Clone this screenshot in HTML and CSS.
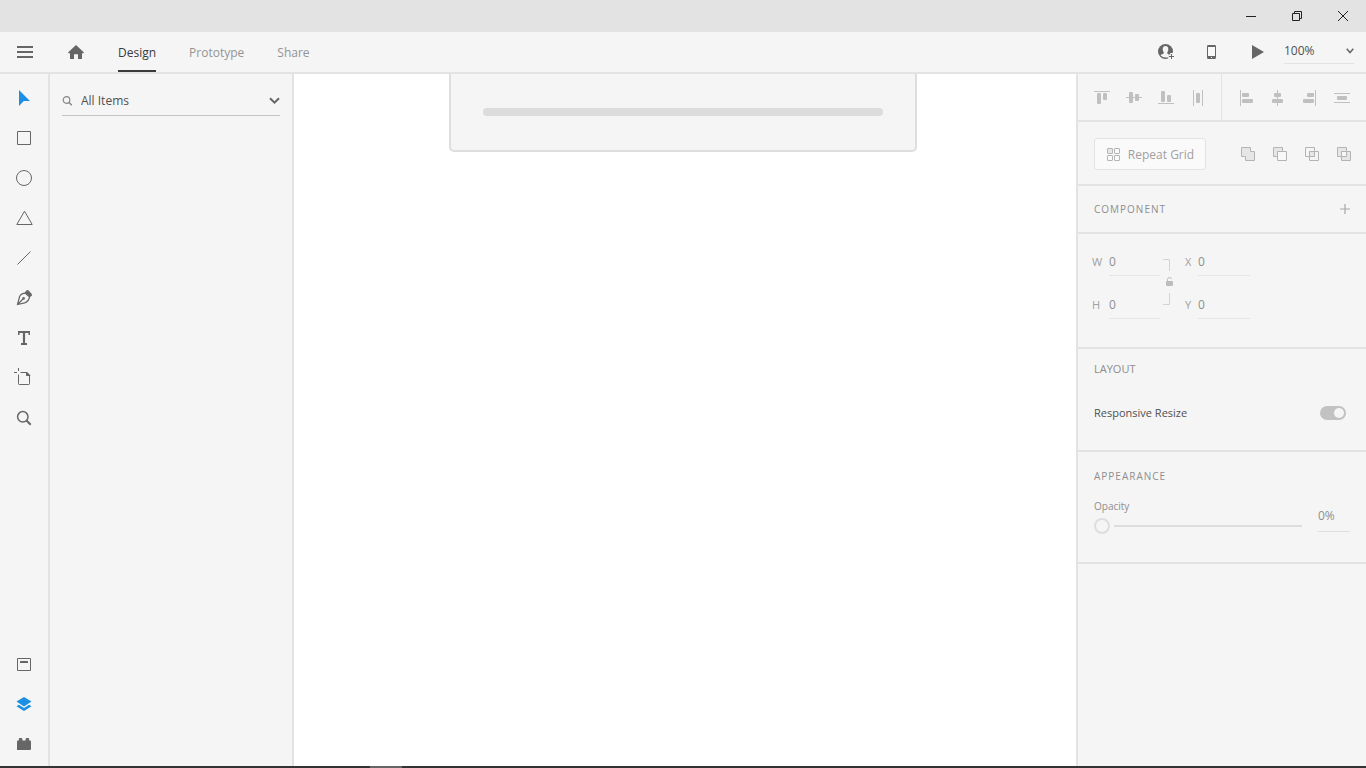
FILE: index.html
```html
<!DOCTYPE html>
<html lang="en">
<head>
    <meta charset="UTF-8">
    <meta name="viewport" content="width=device-width, initial-scale=1.0">
    <title>Design</title>
    <link rel="stylesheet" href="styles.css">
</head>
<body>
    <div class="titlebar">
        <button class="window-btn" aria-label="Minimize">
            <svg width="10" height="10" viewBox="0 0 10 10"><path d="M0 5.5h10" stroke="#222"/></svg>
        </button>
        <button class="window-btn" aria-label="Restore">
            <svg width="10" height="10" viewBox="0 0 10 10" fill="none" stroke="#222"><path d="M.5 2.5h7v7h-7zM2.5 2.5v-2h7v7h-2"/></svg>
        </button>
        <button class="window-btn" aria-label="Close">
            <svg width="10" height="10" viewBox="0 0 10 10"><path d="M0 0l10 10M10 0L0 10" stroke="#222"/></svg>
        </button>
    </div>

    <header class="header">
        <button class="menu-btn" aria-label="Menu">
            <svg width="16" height="12" viewBox="0 0 16 12" fill="#666"><path d="M0 0h16v2H0zM0 5h16v2H0zM0 10h16v2H0z"/></svg>
        </button>
        <button class="menu-btn home" aria-label="Home">
            <svg width="16" height="16" viewBox="0 0 16 16" fill="#666"><path d="M8 1L0 8.400l.7.800H2V15h4v-4.800h4V15h4V9.200h1.300l.7-.8z"/></svg>
        </button>
        <nav class="tabs">
            <a class="tab active" href="#">Design</a>
            <a class="tab" href="#">Prototype</a>
            <a class="tab" href="#">Share</a>
        </nav>
        <div class="header-actions">
            <button class="action-btn" aria-label="Invite">
                <svg width="18" height="18" viewBox="0 0 18 18">
                    <circle cx="8.500" cy="8.500" r="7.500" fill="#666"/>
                    <path d="M8.500 3C6.500 3 5.600 4.500 5.700 6.300c.1 1.500.5 2.300 1 3 .3.900-.1 1.300-1 1.700-.9.300-1.700.7-2.200 1.300A6.700 6.700 0 0 0 8.500 14.500h3V11.300c-1.300-.6-1.500-1.100-1.200-2 .6-.7 1-1.500 1-3C11.400 4.500 10.500 3 8.500 3z" fill="#f5f5f5"/>
                    <path d="M11.200 11.500h2V10h3.300v6h-5.300z" fill="#f5f5f5"/>
                    <path d="M14.500 11v5M12 13.500h5" stroke="#666"/>
                </svg>
            </button>
            <button class="action-btn" aria-label="Device preview">
                <svg width="10" height="16" viewBox="0 0 10 16"><rect x=".5" y="1.500" width="8" height="13" rx="1" fill="#f8f8f8" stroke="#666"/><path d="M.5 1h8v2h-8zM.5 12h8v3h-8z" fill="#666"/><path d="M4 13.500h1" stroke="#f5f5f5"/></svg>
            </button>
            <button class="action-btn" aria-label="Play">
                <svg width="12" height="14" viewBox="0 0 12 14"><path d="M0 0v14l12-7z" fill="#666"/></svg>
            </button>
            <div class="zoom-box">
                <select class="zoom-select" aria-label="Zoom">
                    <option>100%</option>
                </select>
                <svg class="chevron" width="8" height="6" viewBox="0 0 8 6"><path d="M.7.8L4 4.500 7.300.8" fill="none" stroke="#666" stroke-width="1.500"/></svg>
            </div>
        </div>
    </header>

    <main class="workspace">
        <div class="toolbar">
            <div class="tool-group">
                <button class="tool" aria-label="Select">
                    <svg width="24" height="24" viewBox="0 0 24 24"><path d="M7 4v16l4.700-5H18z" fill="#1a8fe3" stroke="none"/></svg>
                </button>
                <button class="tool" aria-label="Rectangle">
                    <svg width="24" height="24" viewBox="0 0 24 24"><path d="M5.500 5.500h13v13h-13z"/></svg>
                </button>
                <button class="tool" aria-label="Ellipse">
                    <svg width="24" height="24" viewBox="0 0 24 24"><circle cx="12" cy="12" r="7.500"/></svg>
                </button>
                <button class="tool" aria-label="Polygon">
                    <svg width="24" height="24" viewBox="0 0 24 24"><path d="M12.500 5.200l7.700 13.300H4.800z"/></svg>
                </button>
                <button class="tool" aria-label="Line">
                    <svg width="24" height="24" viewBox="0 0 24 24"><path d="M5.500 18.500L18.500 5.500"/></svg>
                </button>
                <button class="tool" aria-label="Pen">
                    <svg width="24" height="24" viewBox="0 0 24 24"><path d="M13.500 7.200Q9 7.500 7.600 10.500L5.500 18.500l7.200-1.600q4.300-1.700 4.800-6zM5.500 18.500l5.500-5.500" stroke-width="1.200"/><circle cx="11.600" cy="12.400" r="1.300" fill="#666" stroke="none"/><path d="M12.800 6.600l2-2.600 1.600.300 3.400 3.600v1.300l-1.900 2.400z" fill="#666" stroke="none"/></svg>
                </button>
                <button class="tool" aria-label="Text">
                    <svg width="24" height="24" viewBox="0 0 24 24"><path d="M6 5h12v4h-1.500V7h-3.400v10H15v2H9v-2h1.900V7H7.500v2H6z" fill="#666" stroke="none"/></svg>
                </button>
                <button class="tool" aria-label="Artboard">
                    <svg width="24" height="24" viewBox="0 0 24 24"><path d="M8.500 6.500h6l3 3v8.200q0 .8-.8.800H7.300q-.8 0-.8-.8V8.500"/><path d="M14.500 6v3.500H18z" fill="#666"/><path d="M2 6.500h3M6.500 2v3"/></svg>
                </button>
                <button class="tool" aria-label="Zoom tool">
                    <svg width="24" height="24" viewBox="0 0 24 24"><circle cx="10.800" cy="10.800" r="5.200" stroke-width="1.500"/><path d="M14.500 14.500l4.200 4.200" stroke-width="2"/></svg>
                </button>
            </div>
            <div class="tool-group">
                <button class="tool" aria-label="Assets">
                    <svg width="24" height="24" viewBox="0 0 24 24"><path d="M5.500 6.500h13v12h-13z"/><path d="M8 10h8" stroke-width="2"/></svg>
                </button>
                <button class="tool active" aria-label="Layers">
                    <svg width="24" height="24" viewBox="0 0 24 24"><path d="M12 5l7.500 4.500L12 14.500 4.500 9.500z"/><path d="M4.500 14.200L6.800 12.800 12 16l5.200-3.200 2.300 1.400L12 19z"/></svg>
                </button>
                <button class="tool" aria-label="Plugins">
                    <svg width="24" height="24" viewBox="0 0 24 24"><path d="M5 18V9.500q0-.9 1-.9h.8V7.300q0-1.300 1.200-1.300h1.200q1.200 0 1.200 1.300v1.300h3.200V7.300q0-1.300 1.200-1.300H16q1.200 0 1.200 1.300v1.300h.8q1 0 1 .9V17q0 1-1 1z" fill="#666" stroke="none"/></svg>
                </button>
            </div>
        </div>

        <aside class="layers">
            <div class="filter">
                <svg width="11" height="10" viewBox="0 0 11 10" fill="none" stroke="#888"><circle cx="4.500" cy="4" r="3.300" stroke-width="1.200"/><path d="M7 6.500L9.800 9.300" stroke-width="1.500"/></svg>
                <select class="filter-select" aria-label="Filter layers">
                    <option>All Items</option>
                </select>
                <svg class="chevron" width="11" height="8" viewBox="0 0 11 8"><path d="M1 1.200L5.500 5.700 10 1.200" fill="none" stroke="#666" stroke-width="2"/></svg>
            </div>
        </aside>

        <section class="canvas">
            <div class="artboard">
                <div class="bar"></div>
            </div>
        </section>

        <aside class="inspector">
            <div class="align-row">
                <div class="align-group">
                    <button class="icon-btn" aria-label="Align top"><svg width="16" height="16" viewBox="0 0 16 16"><path d="M0 1.500h16" stroke="#c0c0c0"/><rect x="3" y="3" width="4" height="11" rx="1" fill="#c0c0c0"/><rect x="9" y="3" width="4" height="7" rx="1" fill="#c0c0c0"/></svg></button>
                    <button class="icon-btn" aria-label="Align middle"><svg width="16" height="16" viewBox="0 0 16 16"><path d="M0 7.500h16" stroke="#c0c0c0"/><rect x="3" y="2" width="4" height="11" rx="1" fill="#c0c0c0"/><rect x="9" y="4" width="4" height="7" rx="1" fill="#c0c0c0"/></svg></button>
                    <button class="icon-btn" aria-label="Align bottom"><svg width="16" height="16" viewBox="0 0 16 16"><path d="M0 13.500h16" stroke="#c0c0c0"/><rect x="3" y="1" width="4" height="11" rx="1" fill="#c0c0c0"/><rect x="9" y="5" width="4" height="7" rx="1" fill="#c0c0c0"/></svg></button>
                    <button class="icon-btn" aria-label="Distribute horizontally"><svg width="16" height="16" viewBox="0 0 16 16"><path d="M3.500 0v16M12.500 0v16" stroke="#c0c0c0"/><rect x="6" y="3" width="4" height="10" rx="1" fill="#c0c0c0"/></svg></button>
                </div>
                <div class="align-group">
                    <button class="icon-btn" aria-label="Align left"><svg width="16" height="16" viewBox="0 0 16 16"><path d="M2.500 0v16" stroke="#c0c0c0"/><rect x="4" y="3" width="7" height="4" rx="1" fill="#c0c0c0"/><rect x="4" y="9" width="11" height="4" rx="1" fill="#c0c0c0"/></svg></button>
                    <button class="icon-btn" aria-label="Align center"><svg width="16" height="16" viewBox="0 0 16 16"><path d="M7.500 0v16" stroke="#c0c0c0"/><rect x="4" y="3" width="7" height="4" rx="1" fill="#c0c0c0"/><rect x="2" y="9" width="11" height="4" rx="1" fill="#c0c0c0"/></svg></button>
                    <button class="icon-btn" aria-label="Align right"><svg width="16" height="16" viewBox="0 0 16 16"><path d="M13.500 0v16" stroke="#c0c0c0"/><rect x="5" y="3" width="7" height="4" rx="1" fill="#c0c0c0"/><rect x="1" y="9" width="11" height="4" rx="1" fill="#c0c0c0"/></svg></button>
                    <button class="icon-btn" aria-label="Distribute vertically"><svg width="16" height="16" viewBox="0 0 16 16"><path d="M0 3.500h16M0 12.500h16" stroke="#c0c0c0"/><rect x="3" y="6" width="10" height="4" rx="1" fill="#c0c0c0"/></svg></button>
                </div>
            </div>

            <div class="repeat-row">
                <button class="repeat-btn">
                    <svg width="14" height="14" viewBox="0 0 14 14" fill="#fafafa" stroke="#b4b4b4"><rect x="1.500" y=".5" width="5" height="5" rx=".5" fill="#e8e8e8"/><rect x="8.500" y=".5" width="5" height="5" rx=".5"/><rect x="1.500" y="7.500" width="5" height="5" rx=".5"/><rect x="8.500" y="7.500" width="5" height="5" rx=".5"/></svg>
                    Repeat Grid
                </button>
                <div class="shape-group">
                    <button class="icon-btn" aria-label="Add"><svg width="16" height="16" viewBox="0 0 16 16" fill="#e6e6e6" stroke="#b4b4b4"><path d="M1.500 1.500h9v4h4v9h-9v-4h-4z"/></svg></button>
                    <button class="icon-btn" aria-label="Subtract"><svg width="16" height="16" viewBox="0 0 16 16" fill="#e6e6e6" stroke="#b4b4b4"><path d="M1.500 1.500h9v9h-9z"/><path d="M5.500 5.500h9v9h-9z" fill="#f8f8f8"/></svg></button>
                    <button class="icon-btn" aria-label="Intersect"><svg width="16" height="16" viewBox="0 0 16 16" fill="none" stroke="#b4b4b4"><path d="M1.500 1.500h9v9h-9z"/><path d="M5.500 5.500h9v9h-9z"/><path d="M5.500 5.500h5v5h-5z" fill="#e6e6e6"/></svg></button>
                    <button class="icon-btn" aria-label="Exclude overlap"><svg width="16" height="16" viewBox="0 0 16 16" fill="#e6e6e6" stroke="#b4b4b4"><path d="M1.500 1.500h9v9h-9z"/><path d="M5.500 5.500h9v9h-9z"/><path d="M5.500 5.500h5v5h-5z" fill="#f8f8f8"/></svg></button>
                </div>
            </div>

            <div class="component-row">
                <h2 class="section-title">COMPONENT</h2>
                <button class="add-btn" aria-label="Add component">
                    <svg width="10" height="10" viewBox="0 0 10 10"><path d="M5 0v10M0 5h10" stroke="#a8a8a8" stroke-width="1.200"/></svg>
                </button>
            </div>

            <div class="size-section">
                <div class="fields">
                    <div class="field">
                        <label for="width">W</label>
                        <input type="text" id="width" value="0">
                    </div>
                    <div class="field">
                        <label for="height">H</label>
                        <input type="text" id="height" value="0">
                    </div>
                </div>
                <button class="lock-btn" aria-label="Lock aspect ratio">
                    <svg width="10" height="56" viewBox="0 0 10 56" fill="none" stroke="#d4d4d4"><path d="M0 1.500h6.500V13M6.500 35v11.500H0"/><path d="M4.500 24v-2.500q0-2 2-2t2 1.500" stroke="#bdbdbd"/><rect x="3" y="23" width="7" height="5" rx="1" fill="#bdbdbd" stroke="none"/></svg>
                </button>
                <div class="fields position">
                    <div class="field">
                        <label for="pos-x">X</label>
                        <input type="text" id="pos-x" value="0">
                    </div>
                    <div class="field">
                        <label for="pos-y">Y</label>
                        <input type="text" id="pos-y" value="0">
                    </div>
                </div>
            </div>

            <div class="layout-section">
                <h2 class="section-title plain">LAYOUT</h2>
                <div class="resize-row">
                    <label for="resize">Responsive Resize</label>
                    <input type="checkbox" id="resize" class="switch" checked>
                </div>
            </div>

            <div class="appearance-section">
                <h2 class="section-title">APPEARANCE</h2>
                <div class="opacity-row">
                    <div class="opacity-slider">
                        <label for="opacity">Opacity</label>
                        <input type="range" id="opacity" min="0" max="100" value="0">
                    </div>
                    <input type="text" class="opacity-value" aria-label="Opacity value" value="0%">
                </div>
            </div>
        </aside>
    </main>

    <div class="taskbar"><div class="taskbar-item"></div></div>
</body>
</html>
```

FILE: styles.css
```css
* {
    box-sizing: border-box;
}

body {
    margin: 0;
    height: 100vh;
    display: flex;
    flex-direction: column;
    overflow: hidden;
    background-color: #f5f5f5;
    color: #505050;
    font-family: "Open Sans", "Noto Sans", sans-serif;
    font-size: 12px;
    line-height: 16px;
}

button {
    display: flex;
    align-items: center;
    justify-content: center;
    padding: 0;
    border: none;
    background: none;
    color: inherit;
    font: inherit;
    cursor: pointer;
}

input,
select {
    margin: 0;
    padding: 0;
    border: none;
    border-radius: 0;
    outline: none;
    background: none;
    color: inherit;
    font: inherit;
    appearance: none;
}

svg {
    display: block;
    flex-shrink: 0;
}

/* Window title bar */
.titlebar {
    display: flex;
    justify-content: flex-end;
    height: 32px;
    flex-shrink: 0;
    background-color: #e3e3e3;
}

.window-btn {
    width: 46px;
}

/* Header */
.header {
    display: flex;
    height: 42px;
    flex-shrink: 0;
    border-bottom: 2px solid #e3e3e3;
}

.menu-btn {
    width: 50px;
}

.menu-btn.home {
    width: 52px;
}

.tabs {
    display: flex;
    gap: 33px;
    padding-left: 16px;
}

.tab {
    padding-top: 13px;
    border-bottom: 2px solid transparent;
    color: #949494;
    text-decoration: none;
}

.tab.active {
    color: #3a3a3a;
    border-color: #3a3a3a;
}

.header-actions {
    display: flex;
    margin-left: auto;
    padding-right: 12px;
}

.action-btn {
    width: 46px;
}

.zoom-box {
    display: flex;
    align-items: center;
    width: 70px;
    height: 26px;
    margin: 6px 0 0 3px;
    border-bottom: 1px solid #e3e3e3;
}

.zoom-select,
.filter-select {
    flex: 1;
    min-width: 0;
}

/* Workspace */
.workspace {
    display: flex;
    flex: 1;
    min-height: 0;
}

.toolbar {
    display: flex;
    flex-direction: column;
    justify-content: space-between;
    width: 50px;
    padding: 4px 0 2px;
    border-right: 2px solid #e3e3e3;
}

.tool {
    width: 48px;
    height: 40px;
}

.tool svg {
    fill: none;
    stroke: #666;
}

.tool.active svg {
    fill: #1a8fe3;
    stroke: none;
}

.layers {
    width: 244px;
    padding: 12px;
    border-right: 2px solid #e3e3e3;
}

.filter {
    display: flex;
    align-items: center;
    gap: 8px;
    height: 30px;
    border-bottom: 1px solid #c4c4c4;
}

.canvas {
    flex: 1;
    padding-right: 4px;
    background-color: #fff;
}

.artboard {
    max-width: 468px;
    margin: 0 auto;
    padding: 34px 32px;
    border: 2px solid #dedede;
    border-top: none;
    border-radius: 0 0 5px 5px;
    background-color: #f5f5f5;
}

.bar {
    height: 8px;
    border-radius: 4px;
    background-color: #dcdcdc;
}

/* Inspector */
.inspector {
    width: 290px;
    border-left: 2px solid #e3e3e3;
    color: #8e8e8e;
}

.inspector > div {
    border-bottom: 2px solid #e3e3e3;
}

.align-row {
    display: flex;
    height: 48px;
}

.align-group {
    display: flex;
    width: 144px;
    padding: 2px 8px 0;
}

.align-group:first-child {
    border-right: 1px solid #e3e3e3;
}

.icon-btn {
    width: 32px;
    flex-shrink: 0;
}

.repeat-row {
    display: flex;
    justify-content: space-between;
    padding: 16px 6px 14px 16px;
}

.repeat-btn {
    width: 112px;
    height: 32px;
    gap: 8px;
    padding-top: 1px;
    border: 1px solid #e3e3e3;
    border-radius: 3px;
    background-color: #fafafa;
    color: #a0a0a0;
}

.shape-group {
    display: flex;
}

.section-title {
    margin: 0;
    font-size: 10px;
    font-weight: 400;
    letter-spacing: 1px;
}

.section-title.plain {
    font-size: 11px;
    letter-spacing: 0;
}

.component-row {
    display: flex;
    align-items: center;
    justify-content: space-between;
    height: 48px;
    padding: 0 16px;
}

.size-section {
    display: flex;
    padding: 18px 14px 28px;
}

.fields {
    display: flex;
    flex-direction: column;
    gap: 19px;
    width: 68px;
}

.fields.position {
    width: 65px;
    margin-left: 12px;
}

.field {
    display: flex;
}

.field label {
    width: 17px;
    padding-top: 2px;
    font-size: 11px;
    color: #a0a0a0;
}

.position .field label {
    width: 13px;
}

.field input {
    flex: 1;
    min-width: 0;
    height: 24px;
    padding-bottom: 5px;
    border-bottom: 1px solid #e6e6e6;
}

.lock-btn {
    width: 10px;
    margin-left: 3px;
}

.layout-section {
    padding: 12px 16px 27px;
}

.resize-row {
    display: flex;
    align-items: center;
    justify-content: space-between;
    height: 20px;
    margin-top: 26px;
    padding-right: 4px;
    font-size: 11px;
    color: #505050;
}

.switch {
    width: 26px;
    height: 14px;
    padding: 2px;
    border-radius: 7px;
    background-color: #c2c2c2;
}

.switch::before {
    content: "";
    display: block;
    width: 10px;
    height: 10px;
    border-radius: 50%;
    background-color: #f5f5f5;
}

.switch:checked::before {
    margin-left: auto;
}

.appearance-section {
    padding: 16px 16px 28px;
}

.opacity-row {
    display: flex;
    gap: 16px;
    margin-top: 14px;
}

.opacity-slider {
    display: flex;
    flex: 1;
    flex-direction: column;
    gap: 4px;
    font-size: 10px;
}

.opacity-slider input {
    width: 100%;
    height: 16px;
    background: linear-gradient(#dedede, #dedede) no-repeat 20px 7px / 100% 2px;
}

.opacity-slider input::-webkit-slider-thumb {
    width: 16px;
    height: 16px;
    border: 2px solid #dedede;
    border-radius: 50%;
    background-color: #f5f5f5;
    appearance: none;
}

.opacity-value {
    width: 32px;
    height: 34px;
    padding-top: 2px;
    border-bottom: 1px solid #dedede;
}

/* Taskbar edge */
.taskbar {
    height: 2px;
    flex-shrink: 0;
    padding-left: 370px;
    background-color: #333;
}

.taskbar-item {
    width: 32px;
    height: 2px;
    background-color: #666;
}
```
